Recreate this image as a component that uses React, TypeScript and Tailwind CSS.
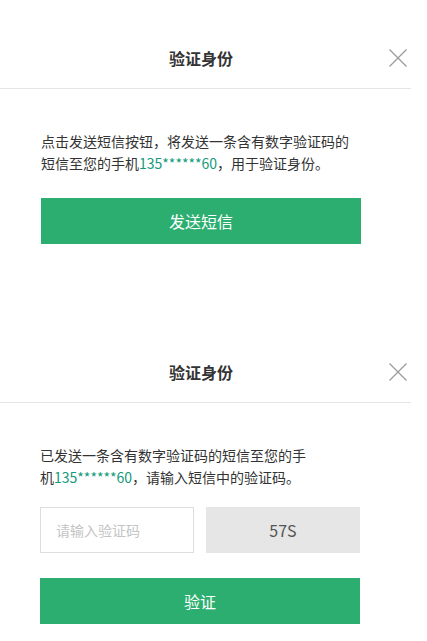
import React from "react";

const font = { fontFamily: '"Noto Sans CJK SC", "Noto Sans", sans-serif' };

function CloseIcon() {
  return (
    <svg width="18" height="18" viewBox="0 0 18 18" className="absolute right-[4px] top-[49px]">
      <path d="M0.5 0.5 L17.5 17.5 M17.5 0.5 L0.5 17.5" stroke="#9a9a9a" strokeWidth="1.2" fill="none" />
    </svg>
  );
}

function Header() {
  return (
    <div className="relative w-[411px] border-b border-[#e5e5e5] pt-[44px] pb-[16px] pr-[9px] text-center">
      <div className="text-[16px] leading-[28px] font-bold text-[#333]">验证身份</div>
      <CloseIcon />
    </div>
  );
}

function Phone() {
  return <span className="text-[#129a7a]">135******60</span>;
}

export default function App() {
  return (
    <div className="w-[427px] h-[641px] bg-white" style={font}>
      {/* step 1: send sms */}
      <section>
        <Header />
        <div className="pl-[41px] pt-[41px]">
          <p className="text-[14px] leading-[22px] text-[#333]">
            点击发送短信按钮，将发送一条含有数字验证码的
            <br />
            短信至您的手机<Phone />，用于验证身份。
          </p>
          <button className="mt-[24px] h-[46px] w-[320px] bg-[#2bae6f] text-[16px] text-white">
            发送短信
          </button>
        </div>
      </section>

      {/* step 2: enter code */}
      <section className="mt-[70px]">
        <Header />
        <div className="pl-[40px] pt-[41px]">
          <p className="text-[14px] leading-[22px] text-[#333]">
            已发送一条含有数字验证码的短信至您的手
            <br />
            机<Phone />，请输入短信中的验证码。
          </p>
          <div className="mt-[19px] flex w-[320px] gap-[12px]">
            <input
              placeholder="请输入验证码"
              className="h-[46px] w-[154px] border border-[#dddddd] px-[15px] text-[14px] text-[#333] outline-none placeholder:text-[#c4c4c4]"
            />
            <div className="flex h-[46px] w-[154px] items-center justify-center bg-[#e6e6e6] text-[16px] text-[#555]">
              57S
            </div>
          </div>
          <button className="mt-[25px] h-[46px] w-[320px] bg-[#2bae6f] text-[16px] text-white">
            验证
          </button>
        </div>
      </section>
    </div>
  );
}
